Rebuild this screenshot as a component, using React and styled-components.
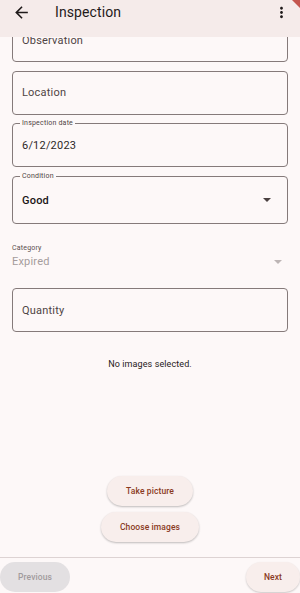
import React from 'react';
import styled, { createGlobalStyle } from 'styled-components';

const GlobalStyle = createGlobalStyle`
  html, body {
    margin: 0;
    padding: 0;
    background: #fdf8f8;
  }
  * {
    box-sizing: border-box;
  }
`;

export default function App() {
  return (
    <Screen>
      <GlobalStyle />
      <AppBar>
        <IconButton>
          <svg width="19" height="19" viewBox="0 0 24 24" fill="#1f1a1a">
            <path d="M20 11H7.83l5.59-5.59L12 4l-8 8 8 8 1.41-1.41L7.83 13H20v-2z" />
          </svg>
        </IconButton>
        <Title>Inspection</Title>
        <MenuButton>
          <svg width="17" height="17" viewBox="0 0 24 24" fill="#1f1a1a">
            <path d="M12 8c1.1 0 2-.9 2-2s-.9-2-2-2-2 .9-2 2 .9 2 2 2zm0 2c-1.1 0-2 .9-2 2s.9 2 2 2 2-.9 2-2-.9-2-2-2zm0 6c-1.1 0-2 .9-2 2s.9 2 2 2 2-.9 2-2-.9-2-2-2z" />
          </svg>
        </MenuButton>
        <DebugCorner width="8" height="8" viewBox="0 0 8 8">
          <polygon points="0,0 8,0 8,8" fill="#c4564f" />
        </DebugCorner>
      </AppBar>

      <Body>
        <Form>
          <Field first>
            <FieldText>Observation</FieldText>
          </Field>
          <Field gap={8.5}>
            <FieldText>Location</FieldText>
          </Field>
          <Field gap={8.5}>
            <FloatLabel>Inspection date</FloatLabel>
            <FieldText value>6/12/2023</FieldText>
          </Field>
          <Field gap={9} tall>
            <FloatLabel>Condition</FloatLabel>
            <FieldText strong>Good</FieldText>
            <Caret color="#4a4040" />
          </Field>

          <Category>
            <SmallLabel>Category</SmallLabel>
            <CategoryRow>
              <DisabledValue>Expired</DisabledValue>
              <Caret color="#bdb5b5" />
            </CategoryRow>
          </Category>

          <Field gap={19.5}>
            <FieldText>Quantity</FieldText>
          </Field>

          <EmptyNote>No images selected.</EmptyNote>
        </Form>

        <ButtonStack>
          <TonalButton>Take picture</TonalButton>
          <TonalButton>Choose images</TonalButton>
        </ButtonStack>
      </Body>

      <Footer>
        <NavButton disabled>Previous</NavButton>
        <NavButton>Next</NavButton>
      </Footer>
    </Screen>
  );
}

const Caret = ({ color }) => (
  <CaretIcon width="8" height="4" viewBox="0 0 10 5">
    <polygon points="0,0 10,0 5,5" fill={color} />
  </CaretIcon>
);

const Screen = styled.div`
  width: 100%;
  height: 100vh;
  display: flex;
  flex-direction: column;
  background: #fdf8f8;
  font-family: Roboto, "Liberation Sans", sans-serif;
  overflow: hidden;
`;

const AppBar = styled.header`
  position: relative;
  height: 37px;
  flex-shrink: 0;
  display: flex;
  align-items: flex-start;
  padding: 3px 10px 0 12px;
  background: #f5ebea;
  z-index: 1;
`;

const IconButton = styled.div`
  width: 19px;
  height: 19px;
  display: flex;
`;

const Title = styled.div`
  margin-left: 24px;
  flex: 1;
  font-size: 14px;
  line-height: 19px;
  color: #1f1a1a;
  letter-spacing: 0.1px;
`;

const MenuButton = styled.div`
  width: 17px;
  height: 17px;
  margin-top: 1px;
  display: flex;
`;

const DebugCorner = styled.svg`
  position: absolute;
  top: 0;
  right: 0;
`;

const Body = styled.main`
  flex: 1;
  display: flex;
  flex-direction: column;
  overflow: hidden;
`;

const Form = styled.div`
  display: flex;
  flex-direction: column;
  padding: 0 12px;
`;

const Field = styled.div`
  position: relative;
  height: ${p => (p.tall ? 48 : 44)}px;
  margin-top: ${p => (p.first ? -19 : p.gap)}px;
  border: 1px solid #857a7a;
  border-radius: 4px;
  display: flex;
  align-items: center;
  padding: 0 16px 0 9px;
`;

const FieldText = styled.div`
  flex: 1;
  font-size: 11px;
  letter-spacing: 0.2px;
  color: ${p => (p.strong ? '#1a1515' : p.value ? '#2e2828' : '#4f4444')};
  font-weight: ${p => (p.strong ? 500 : 400)};
`;

const FloatLabel = styled.span`
  position: absolute;
  top: -5px;
  left: 7px;
  padding: 0 2px;
  background: #fdf8f8;
  font-size: 7px;
  line-height: 9px;
  color: #4f4444;
  letter-spacing: 0.2px;
`;

const CaretIcon = styled.svg`
  flex-shrink: 0;
`;

const Category = styled.div`
  margin-top: 19.5px;
  display: flex;
  flex-direction: column;
  gap: 2px;
`;

const SmallLabel = styled.div`
  font-size: 7px;
  line-height: 9px;
  color: #5a4f4f;
  letter-spacing: 0.2px;
`;

const CategoryRow = styled.div`
  display: flex;
  align-items: center;
  padding-right: 6px;
  height: 14px;
`;

const DisabledValue = styled.div`
  flex: 1;
  font-size: 11px;
  letter-spacing: 0.2px;
  color: #a59c9c;
`;

const EmptyNote = styled.div`
  margin-top: 25.5px;
  text-align: center;
  font-size: 9px;
  line-height: 12px;
  color: #1f1a1a;
  letter-spacing: 0.1px;
`;

const ButtonStack = styled.div`
  margin-top: auto;
  padding-bottom: 15px;
  display: flex;
  flex-direction: column;
  align-items: center;
  gap: 6.5px;
`;

const TonalButton = styled.button`
  height: 30px;
  padding: 0 19px;
  border: none;
  border-radius: 15px;
  background: #f8eeec;
  box-shadow: 0 1px 2px rgba(0, 0, 0, 0.2), 0 1px 3px rgba(0, 0, 0, 0.06);
  font-family: Roboto, "Liberation Sans", sans-serif;
  font-size: 8.5px;
  font-weight: 500;
  letter-spacing: 0.1px;
  color: #8a3a1e;
`;

const Footer = styled.footer`
  height: 36px;
  flex-shrink: 0;
  border-top: 1px solid #ddd3d3;
  display: flex;
  justify-content: space-between;
  align-items: flex-start;
  padding-top: 3.5px;
`;

const NavButton = styled.button`
  height: 30px;
  padding: 0 18px;
  border: none;
  border-radius: 15px;
  background: ${p => (p.disabled ? '#e3e0e2' : '#f8eeec')};
  box-shadow: ${p => (p.disabled ? 'none' : '0 1px 2px rgba(0, 0, 0, 0.2)')};
  font-family: Roboto, "Liberation Sans", sans-serif;
  font-size: 8.5px;
  font-weight: 500;
  letter-spacing: 0.1px;
  color: ${p => (p.disabled ? '#a19b9d' : '#8a3a1e')};
`;
